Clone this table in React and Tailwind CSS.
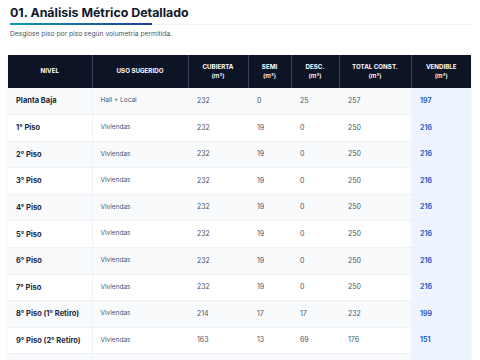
const ROWS = [
  ["Planta Baja", "Hall + Local", 232, 0, 25, 257, 197],
  ["1° Piso", "Viviendas", 232, 19, 0, 250, 216],
  ["2° Piso", "Viviendas", 232, 19, 0, 250, 216],
  ["3° Piso", "Viviendas", 232, 19, 0, 250, 216],
  ["4° Piso", "Viviendas", 232, 19, 0, 250, 216],
  ["5° Piso", "Viviendas", 232, 19, 0, 250, 216],
  ["6° Piso", "Viviendas", 232, 19, 0, 250, 216],
  ["7° Piso", "Viviendas", 232, 19, 0, 250, 216],
  ["8° Piso (1° Retiro)", "Viviendas", 214, 17, 17, 232, 199],
  ["9° Piso (2° Retiro)", "Viviendas", 163, 13, 69, 176, 151],
  // next row only peeks in at the bottom edge
  ["", "", "", "", "", "", ""],
];

const HEADERS = [
  { label: "NIVEL", w: "w-[84px]" },
  { label: "USO SUGERIDO", w: "w-[96px]" },
  { label: "CUBIERTA", unit: true, w: "w-[60px]" },
  { label: "SEMI", unit: true, w: "w-[43px]" },
  { label: "DESC.", unit: true, w: "w-[48px]" },
  { label: "TOTAL CONST.", unit: true, w: "w-[72px]" },
  { label: "VENDIBLE", unit: true, w: "w-[60px]" },
];

export default function App() {
  return (
    <div className="w-[480px] h-[360px] overflow-hidden bg-white font-['Inter',sans-serif]">
      {/* Title */}
      <div className="px-[10px] pt-[3px]">
        <h1 className="text-[12.4px] leading-[19px] font-bold text-[#0f172a]">
          01. Análisis Métrico Detallado
        </h1>
        <div className="mt-[1px] flex h-[2px] items-center">
          <div className="h-[2px] w-[142px] bg-gradient-to-r from-[#0e9bb5] to-[#1e3a9a]" />
          <div className="h-px flex-1 bg-[#eef2f6]" />
        </div>
        <p className="mt-[4px] text-[6.7px] leading-[10px] text-[#475569]">
          Desglose piso por piso según volumetría permitida.
        </p>
      </div>

      {/* Table */}
      <div className="mx-[8px] mt-[16px] w-[463px] shadow-[0_1px_3px_rgba(15,23,42,0.08)]">
        <table className="w-full table-fixed border-collapse">
          <thead>
            <tr className="bg-[#0d1426]">
              {HEADERS.map((h, i) => (
                <th
                  key={h.label}
                  className={`${h.w} h-[33px] p-0 text-center align-middle text-[6.2px] font-bold leading-[8.5px] text-white ${
                    i < HEADERS.length - 1 ? "border-r border-[#3b4456]" : ""
                  }`}
                >
                  <div>{h.label}</div>
                  {h.unit && <div className="font-semibold">(m²)</div>}
                </th>
              ))}
            </tr>
          </thead>
          <tbody>
            {ROWS.map((r, idx) => (
              <tr
                key={idx}
                className={`${idx % 2 === 0 ? "bg-[#f8fafc]" : "bg-white"} border-b border-[#eef1f5]`}
              >
                <td className="h-[26.6px] border-r border-[#eef1f5] pl-[8px] text-[7.5px] font-bold text-[#1e293b]">
                  {r[0]}
                </td>
                <td className="pl-[8px] text-[6.5px] text-[#475569]">{r[1]}</td>
                <td className="pl-[9px] text-[7px] text-[#475569]">{r[2]}</td>
                <td className="pl-[9px] text-[7px] text-[#475569]">{r[3]}</td>
                <td className="pl-[9px] text-[7px] text-[#475569]">{r[4]}</td>
                <td className="pl-[9px] text-[7px] text-[#475569]">{r[5]}</td>
                <td className="bg-[#eef4fe] pl-[9px] text-[7px] font-bold text-[#2f5fc4]">
                  {r[6]}
                </td>
              </tr>
            ))}
          </tbody>
        </table>
      </div>
    </div>
  );
}
